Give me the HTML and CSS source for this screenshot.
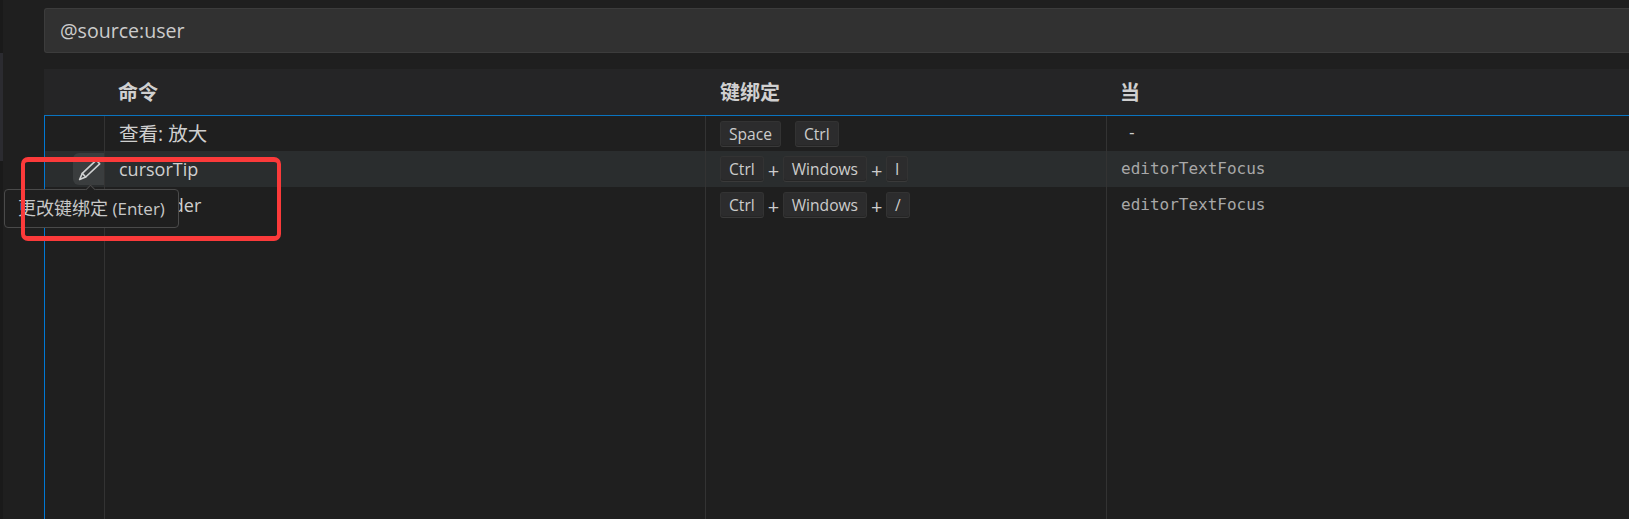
FILE: index.html
```html
<!DOCTYPE html>
<html lang="zh-CN">
<head>
<meta charset="utf-8">
<title>键盘快捷方式</title>
<link rel="stylesheet" href="styles.css">
</head>
<body>
<div class="strip"><div class="strip-thumb"></div></div>
<main class="editor">
  <div class="search">@source:user</div>
  <div class="table">
    <div class="row head">
      <div class="cell"></div>
      <div class="cell cmd">命令</div>
      <div class="cell">键绑定</div>
      <div class="cell">当</div>
    </div>
    <div class="body">
      <div class="row item first">
        <div class="cell action"></div>
        <div class="cell cmd zh">查看: 放大</div>
        <div class="cell keys"><kbd>Space</kbd><span class="gap"></span><kbd>Ctrl</kbd></div>
        <div class="cell when none">-</div>
      </div>
      <div class="row item hover">
        <div class="cell action">
          <span class="edit">
            <svg width="26" height="26" viewBox="0 0 26 26" fill="none" stroke="#d0d2d2" stroke-width="1.6" stroke-linejoin="round" stroke-linecap="round"><path d="M20.3 4.2 23.7 7.8 9.7 21 3.6 23.5 6.3 17.4Z"/><path d="M6.3 17.4 9.7 21"/></svg>
          </span>
        </div>
        <div class="cell cmd">cursorTip</div>
        <div class="cell keys"><kbd>Ctrl</kbd><i>+</i><kbd>Windows</kbd><i>+</i><kbd>I</kbd></div>
        <div class="cell when">editorTextFocus</div>
      </div>
      <div class="row item">
        <div class="cell action"></div>
        <div class="cell cmd">cursorder</div>
        <div class="cell keys"><kbd>Ctrl</kbd><i>+</i><kbd>Windows</kbd><i>+</i><kbd>/</kbd></div>
        <div class="cell when">editorTextFocus</div>
      </div>
      <div class="row fill">
        <div class="cell action"></div>
        <div class="cell"></div>
        <div class="cell"></div>
        <div class="cell"></div>
      </div>
    </div>
  </div>
</main>
<div class="tooltip"><span class="arrow"></span>更改键绑定<span class="tip-key"> (Enter)</span></div>
<div class="mark"></div>
</body>
</html>
```

FILE: styles.css
```css
* { box-sizing: border-box; }
html, body { height: 100%; }
body {
  margin: 0;
  height: 519px;
  overflow: hidden;
  display: flex;
  background: #1f1f1f;
  color: #d4d4d4;
  font-family: "Open Sans", "Noto Sans CJK SC", sans-serif;
}
.strip {
  flex: 0 0 3px;
  background: #1a1a1a;
  padding-top: 53px;
}
.strip-thumb { height: 108px; background: #2b2b30; }
.editor {
  flex: 1;
  min-width: 0;
  display: flex;
  flex-direction: column;
  padding: 8px 0 0 41px;
}
.search {
  height: 45px;
  flex: none;
  background: #313131;
  border: 1px solid #3c3c3c;
  border-right: 0;
  border-radius: 3px 0 0 3px;
  padding-left: 15px;
  font-size: 19.6px;
  line-height: 43px;
  color: #cccccc;
}
.table {
  flex: 1;
  margin-top: 16px;
  display: flex;
  flex-direction: column;
}
.row {
  display: grid;
  grid-template-columns: 59px 601px 401px 1fr;
}
.head {
  height: 47px;
  grid-template-columns: 60px 602px 400px 1fr;
  background: #252526;
  font-weight: 700;
  font-size: 20px;
  line-height: 45px;
  font-family: "Noto Sans CJK SC", sans-serif;
  color: #d0d0d0;
  border-bottom: 1px solid #0a74c0;
}
.head .cell { padding-left: 14px; }
.head .cell:first-child { padding-left: 0; }
.body {
  flex: 1;
  display: flex;
  flex-direction: column;
  border-left: 1px solid #0078d4;
}
.item { height: 36px; flex: none; font-size: 18px; color: #cfcfcf; }
.first { height: 35px; }
.body .zh { font-size: 19.5px; padding-bottom: 3px; }
.hover { background: #2a2d2e; }
.fill { flex: 1; }
.body .cell { padding-left: 14px; border-left: 1px solid #333333; display: flex; align-items: center; white-space: nowrap; }
.body .action { border-left: 0; padding-left: 0; justify-content: flex-end; }
.keys { gap: 4px; }
.keys i { font-style: normal; font-size: 20px; line-height: 26px; color: #cccccc; padding-top: 3px; width: 11px; text-align: center; }
.gap { width: 6px; }
kbd {
  display: block;
  height: 26px;
  padding: 0 8px;
  font-family: "Open Sans", sans-serif;
  font-size: 15.6px;
  line-height: 24px;
  color: #cccccc;
  background: #2c2c2d;
  border: 1px solid #333333;
  border-bottom-color: #3a3a3a;
  border-radius: 3px;
  box-shadow: inset 0 -1px 0 #262626;
}
.when {
  font-family: "DejaVu Sans Mono", monospace;
  font-size: 16px;
  color: #a8a8a8;
  padding-bottom: 2px;
}
.when.none { color: #cccccc; padding-left: 20px; }
.edit {
  width: 31px;
  height: 32px;
  border-radius: 6px 0 0 6px;
  background: #3a3d3e;
  display: flex;
  align-items: center;
  justify-content: center;
}
.tooltip {
  position: absolute;
  left: 4px;
  top: 189px;
  height: 39px;
  padding: 0 13px;
  background: #1f1f1f;
  border: 1px solid #4a4a4a;
  border-radius: 4px;
  font-size: 18px;
  line-height: 37px;
  color: #c8c8c8;
  white-space: nowrap;
}
.tip-key { font-size: 17px; }
.arrow {
  position: absolute;
  left: 81.5px;
  top: -4.5px;
  width: 7px;
  height: 7px;
  background: #1f1f1f;
  border-top: 1px solid #4a4a4a;
  border-left: 1px solid #4a4a4a;
  transform: rotate(45deg);
}
.mark {
  position: absolute;
  left: 21px;
  top: 157px;
  width: 260px;
  height: 84px;
  border: 4px solid #fb3a3a;
  border-top-width: 5px;
  border-bottom-width: 5px;
  border-radius: 7px;
}
```
